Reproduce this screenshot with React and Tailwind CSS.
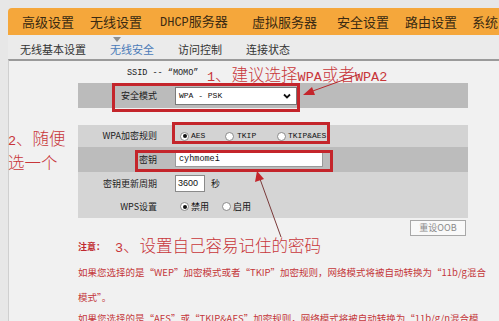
import React from "react";

const cjk = "font-['Noto_Sans_CJK_SC',sans-serif]";
const mono = "font-['Liberation_Mono','Noto_Sans_CJK_SC',monospace]";

function Radio({ checked }) {
  return (
    <span className="inline-flex w-[9px] h-[9px] rounded-full bg-white border border-[#8a8a8a] items-center justify-center shrink-0">
      {checked && <span className="w-[4px] h-[4px] rounded-full bg-[#111]" />}
    </span>
  );
}

function Row({ label, bg, h, children }) {
  return (
    <div className={`flex items-center ${bg} ${h}`}>
      <div className="w-[79px] text-right text-[9px] leading-[12px] text-[#222]">{label}</div>
      <div className="ml-[18px] flex items-center">{children}</div>
    </div>
  );
}

function L({ children }) {
  return <span className="font-['Liberation_Mono',monospace] text-[13.5px]">{children}</span>;
}

export default function App() {
  const tabs = [
    ["高级设置", "w-[68px]"],
    ["无线设置", "w-[70px]"],
    ["DHCP服务器", "w-[92px]"],
    ["虚拟服务器", "w-[85px]"],
    ["安全设置", "w-[68px]"],
    ["路由设置", "w-[67px]"],
    ["系统", "w-[30px]"],
  ];
  return (
    <div className={`w-[499px] h-[321px] overflow-hidden bg-[#e7e7e7] relative ${cjk}`}>
      <div className="pt-[8px] pl-[8px]">
        {/* orange nav */}
        <div className="h-[27px] bg-[#f5a73b] rounded-tl-[4px] flex items-center pl-[14px] text-[13px] text-[#3a2a12] whitespace-nowrap overflow-hidden">
          {tabs.map(([t, w]) => (
            <span key={t} className={`${w} shrink-0 leading-[16px]`}>
              {t.startsWith("DHCP") ? (
                <>
                  <span className={`${mono} text-[12px]`}>DHCP</span>服务器
                </>
              ) : (
                t
              )}
            </span>
          ))}
        </div>
        {/* sub nav */}
        <div className="h-[24px] relative flex items-center pt-[5px] pl-[12px] text-[11px] text-[#333] whitespace-nowrap bg-[#ebebeb]">
          <span className="absolute left-[105px] top-[2px] w-0 h-0 border-l-[4px] border-r-[4px] border-t-[5px] border-l-transparent border-r-transparent border-t-[#8f8f8f]" />
          <span className="w-[90px] shrink-0">无线基本设置</span>
          <span className="w-[68px] shrink-0 text-[#4a7ab8]">无线安全</span>
          <span className="w-[68px] shrink-0">访问控制</span>
          <span className="shrink-0">连接状态</span>
        </div>
        {/* content */}
        <div className="h-[270px] border-t-[2px] border-t-[#9a9a9a] border-l border-l-[#cfcfcf] bg-[#f1f1f1]">
          <div className={`pt-[6px] pl-[118px] text-[8.5px] leading-[13px] text-[#222] ${mono}`}>SSID -- “MOMO”</div>
          <div className="ml-[69px] w-[390px] mt-[3px]">
            <Row label="安全模式" bg="bg-[#bbbbbb]" h="h-[25px]">
              <div className="w-[122px] h-[18px] bg-white border border-[#7a7a7a] flex items-center justify-between pl-[3px] pr-[5px]">
                <span className={`${mono} text-[8px] text-[#111]`}>WPA - PSK</span>
                <svg width="8" height="6" viewBox="0 0 8 6">
                  <path d="M1 1.5 L4 4.5 L7 1.5" fill="none" stroke="#111" strokeWidth="1.8" />
                </svg>
              </div>
            </Row>
            <div className="h-[17px]" />
            <Row label="WPA加密规则" bg="bg-[#d3d3d3]" h="h-[22px]">
              <div className={`flex items-center ${mono} text-[8px] text-[#111]`}>
                <span className="w-[45px] ml-[5px] flex items-center gap-[2px]"><Radio checked />AES</span>
                <span className="w-[52px] flex items-center gap-[3px]"><Radio />TKIP</span>
                <span className="flex items-center gap-[2px]"><Radio />TKIP&amp;AES</span>
              </div>
            </Row>
            <Row label="密钥" bg="bg-[#bcbcbc]" h="h-[25px]">
              <div className={`w-[148px] h-[15px] bg-white border border-[#9a9a9a] flex items-center pl-[3px] ${mono} text-[8.5px] text-[#111]`}>cyhmomei</div>
            </Row>
            <Row label="密钥更新周期" bg="bg-[#d5d5d5]" h="h-[23px]">
              <div className="w-[30px] h-[17px] bg-white border border-[#8a8a8a] flex items-center pl-[2px] text-[9px] font-['Liberation_Sans',sans-serif] text-[#111]">3600</div>
              <span className="ml-[6px] text-[9px] text-[#222]">秒</span>
            </Row>
            <Row label="WPS设置" bg="bg-[#d5d5d5]" h="h-[23px]">
              <div className="flex items-center text-[9px] text-[#111]">
                <span className="ml-[5px] w-[42px] flex items-center gap-[2px]"><Radio checked />禁用</span>
                <span className="flex items-center gap-[2px]"><Radio />启用</span>
              </div>
            </Row>
            <div className="flex justify-end mt-[2px] pr-[2px]">
              <div className="w-[56px] h-[16px] border border-[#a8a8a8] bg-[#f9f9f9] flex items-center justify-center text-[9px] text-[#8a8a8a]">重设OOB</div>
            </div>
          </div>
          <div className="ml-[69px] mt-[5px] text-[9px] leading-[12px] font-bold text-[#c0282d]">注意：</div>
          <div className="ml-[69px] mt-[6px] text-[9.5px] text-[#c4373a] whitespace-nowrap">
            <div className="leading-[26px]">如果您选择的是“WEP”加密模式或者“TKIP”加密规则，网络模式将被自动转换为“11b/g混合</div>
            <div className="leading-[24px]">模式”。</div>
            <div className="leading-[18px]">如果您选择的是“AES”或“TKIP&amp;AES”加密规则，网络模式将被自动转换为“11b/g/n混合模</div>
          </div>
        </div>
      </div>

      {/* annotation red boxes */}
      <div className="absolute left-[112px] top-[83px] w-[188px] h-[29px] border-[3px] border-[#c4252b]" />
      <div className="absolute left-[172px] top-[122px] w-[158px] h-[22px] border-[3px] border-[#c4252b]" />
      <div className="absolute left-[135px] top-[150px] w-[198px] h-[22px] border-[3px] border-[#c4252b]" />

      {/* annotation texts */}
      <div className="absolute left-[207px] top-[64px] text-[16.5px] leading-[20px] font-light text-[#c8363a] whitespace-nowrap">
        <L>1</L>、建议选择<L>WPA</L>或者<L>WPA2</L>
      </div>
      <div className="absolute left-[8px] top-[128px] text-[16.5px] leading-[20px] font-light text-[#c8363a] whitespace-nowrap">
        <div><L>2</L>、随便</div>
        <div>选一个</div>
      </div>
      <div className="absolute left-[115px] top-[235px] text-[16.5px] leading-[20px] font-light text-[#c8363a] whitespace-nowrap">
        <L>3</L>、设置自己容易记住的密码
      </div>

      {/* arrows */}
      <svg className="absolute left-0 top-0 pointer-events-none" width="499" height="321" viewBox="0 0 499 321">
        <line x1="360" y1="74" x2="310" y2="92" stroke="#b8282c" strokeWidth="1" />
        <polygon points="303,95 312,87 315,95" fill="#c4252b" />
        <line x1="281" y1="237" x2="260" y2="179" stroke="#7a3a3a" strokeWidth="1" />
        <polygon points="257,171 255,182 264,179" fill="#c4252b" />
      </svg>
    </div>
  );
}
